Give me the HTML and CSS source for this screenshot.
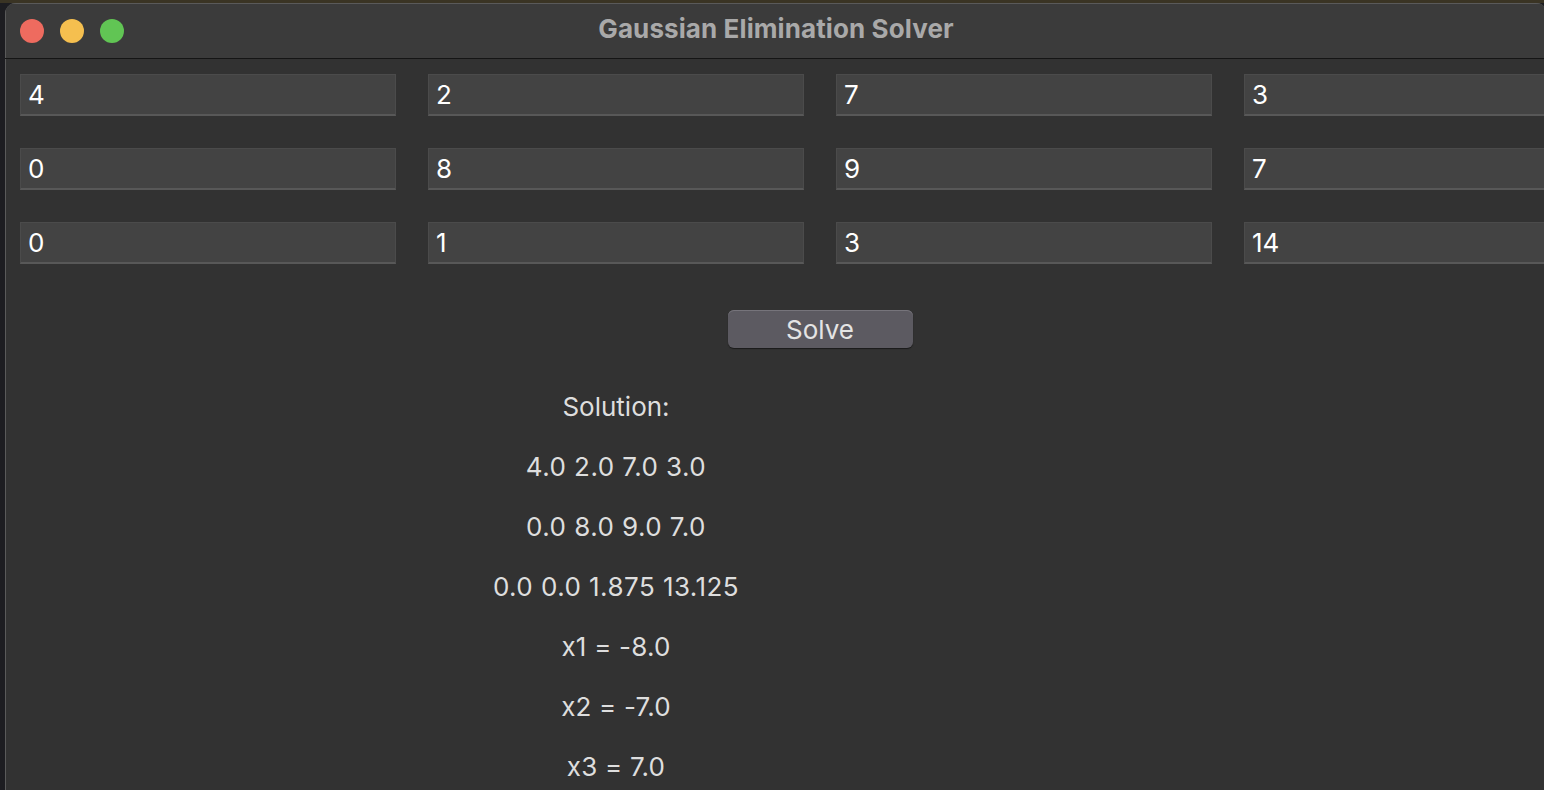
FILE: index.html
```html
<!DOCTYPE html>
<html>
<head>
<meta charset="utf-8">
<link rel="stylesheet" href="styles.css">
</head>
<body>
<div class="desktop">
  <div class="window">
    <div class="titlebar">
      <div class="lights">
        <span class="light red"></span>
        <span class="light yellow"></span>
        <span class="light green"></span>
      </div>
      <div class="title">Gaussian Elimination Solver</div>
    </div>
    <div class="content">
      <div class="matrix">
        <input class="cell" value="4"><input class="cell" value="2"><input class="cell" value="7"><input class="cell" value="3">
        <input class="cell" value="0"><input class="cell" value="8"><input class="cell" value="9"><input class="cell" value="7">
        <input class="cell" value="0"><input class="cell" value="1"><input class="cell" value="3"><input class="cell" value="14">
      </div>
      <div class="controls">
        <button class="solve">Solve</button>
        <div class="results">
          <div class="line">Solution:</div>
          <div class="line num">4.0 2.0 7.0 3.0</div>
          <div class="line num">0.0 8.0 9.0 7.0</div>
          <div class="line num">0.0 0.0 1.875 13.125</div>
          <div class="line eq">x1 = -8.0</div>
          <div class="line eq">x2 = -7.0</div>
          <div class="line eq">x3 = 7.0</div>
        </div>
      </div>
    </div>
  </div>
</div>
</body>
</html>
```
FILE: styles.css
```css
html, body {
  margin: 0;
  padding: 0;
  width: 1544px;
  height: 790px;
  overflow: hidden;
  background: #1d1d21;
  font-family: Inter, "Liberation Sans", sans-serif;
}
.desktop {
  width: 1544px;
  height: 790px;
  overflow: hidden;
  border-top: 3px solid #3a3424;
  box-sizing: border-box;
  padding-left: 5px;
}
.window {
  width: 1542px;
  height: 800px;
  background: #323232;
  border-radius: 11px;
  box-shadow: inset 0 0 0 1px #5a5a5a;
  overflow: hidden;
  display: flex;
  flex-direction: column;
}
.titlebar {
  height: 55px;
  flex: none;
  background: #3b3b3b;
  border-bottom: 1px solid #151515;
  display: flex;
  align-items: center;
  position: relative;
  box-shadow: inset 1px 1px 0 #5a5a5a;
}
.lights {
  display: flex;
  gap: 16px;
  padding-left: 15px;
}
.light {
  width: 24px;
  height: 24px;
  border-radius: 50%;
  display: block;
}
.red { background: #ee6b5f; }
.yellow { background: #f5bf4f; }
.green { background: #61c554; }
.title {
  position: absolute;
  left: 0;
  right: 0;
  top: 0;
  bottom: 0;
  display: flex;
  align-items: center;
  justify-content: center;
  font-weight: 700;
  font-size: 26px;
  letter-spacing: 0.1px;
  color: #a9a9a9;
  padding-bottom: 5px;
}
.content {
  padding: 15px 0 0 14px;
  border-left: 1px solid #5a5a5a;
}
.matrix {
  display: grid;
  grid-template-columns: repeat(4, 376px);
  column-gap: 32px;
  row-gap: 32px;
}
.cell {
  box-sizing: border-box;
  height: 42px;
  width: 376px;
  margin: 0;
  background: #434343;
  border: 1px solid #4b4b4b;
  border-bottom: 2px solid #585858;
  color: #ffffff;
  font-family: Inter, "Liberation Sans", sans-serif;
  font-size: 26px;
  padding: 0 0 0 7px;
  outline: none;
}
.controls {
  display: grid;
  grid-template-columns: repeat(4, 376px);
  column-gap: 32px;
  margin-top: 46px;
}
.solve {
  grid-column: 2 / 4;
  justify-self: center;
  width: 185px;
  height: 38px;
  margin: 0;
  border: none;
  border-radius: 6px;
  background: #5c5a61;
  box-shadow: inset 0 1px 0 #76747b, 0 1px 1px #1a1a1a;
  color: #e4e4e4;
  font-family: Inter, "Liberation Sans", sans-serif;
  font-size: 26px;
  padding: 0;
}
.results {
  grid-column: 2 / 3;
  margin-top: 29px;
  display: flex;
  flex-direction: column;
}
.line {
  height: 60px;
  line-height: 60px;
  text-align: center;
  color: #dedede;
  font-size: 26px;
}
.num {
  letter-spacing: 0.45px;
}
.eq {
  letter-spacing: 0.2px;
}
```
